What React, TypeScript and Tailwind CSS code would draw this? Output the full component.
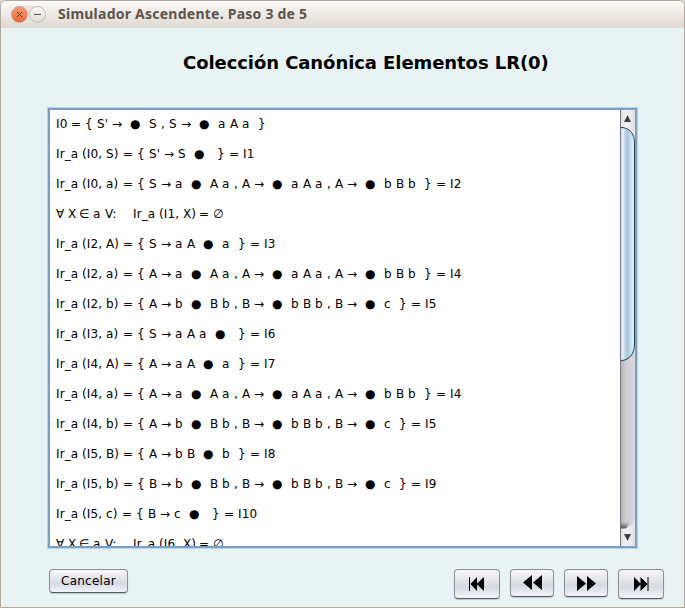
import React from "react";

// Horizontal advance in pixels of each character at 12px.
const advances: Record<string, number> = {
  I: 3, r: 5, _: 6, a: 8, b: 8, c: 7, S: 8, A: 8, B: 8, X: 7, V: 8,
  "(": 5, ")": 5, ",": 4, ":": 4, "=": 10, "{": 8, "}": 8, "'": 3,
  "→": 10, "●": 11, "∀": 8, "∈": 10, "∅": 10,
};
const SPACE = 4;

const lines = [
  "I0 = { S' →  ●  S , S →  ●  a A a  }",
  "Ir_a (I0, S) = { S' → S  ●   } = I1",
  "Ir_a (I0, a) = { S → a  ●  A a , A →  ●  a A a , A →  ●  b B b  } = I2",
  "∀ X ∈ a V:    Ir_a (I1, X) = ∅",
  "Ir_a (I2, A) = { S → a A  ●  a  } = I3",
  "Ir_a (I2, a) = { A → a  ●  A a , A →  ●  a A a , A →  ●  b B b  } = I4",
  "Ir_a (I2, b) = { A → b  ●  B b , B →  ●  b B b , B →  ●  c  } = I5",
  "Ir_a (I3, a) = { S → a A a  ●   } = I6",
  "Ir_a (I4, A) = { A → a A  ●  a  } = I7",
  "Ir_a (I4, a) = { A → a  ●  A a , A →  ●  a A a , A →  ●  b B b  } = I4",
  "Ir_a (I4, b) = { A → b  ●  B b , B →  ●  b B b , B →  ●  c  } = I5",
  "Ir_a (I5, B) = { A → b B  ●  b  } = I8",
  "Ir_a (I5, b) = { B → b  ●  B b , B →  ●  b B b , B →  ●  c  } = I9",
  "Ir_a (I5, c) = { B → c  ●   } = I10",
  "∀ X ∈ a V:    Ir_a (I6, X) = ∅",
];

function widthOf(part: string) {
  return [...part].reduce((sum, ch) => sum + (ch === " " ? SPACE : advances[ch] ?? 8), 0);
}

function Line({ text }: { text: string }) {
  const parts = text.split(/( +)/).filter(Boolean);
  return (
    <p className="flex h-[30px] leading-[28px] whitespace-pre">
      {parts.map((part, i) => (
        <span key={i} className="block shrink-0" style={{ width: widthOf(part) }}>{part}</span>
      ))}
    </p>
  );
}

function TitleBar() {
  return (
    <header className="flex h-[27px] shrink-0 items-center rounded-t-[5px] bg-linear-to-b from-[#fbfaf8] to-[#dfd8d0] pl-[10px]">
      <div className="flex gap-[1px] rounded-full bg-[#e8e4df]">
        <button className="flex size-[17px] items-center justify-center rounded-full border border-[#c9a394] bg-linear-to-b from-[#f59a77] to-[#ec6434]">
          <svg width="7" height="7" viewBox="0 0 7 7" stroke="#6d3b2a" strokeWidth="1"><path d="M1 1l5 5M6 1L1 6" /></svg>
        </button>
        <button className="flex size-[17px] items-center justify-center rounded-full border border-[#c3bdb6] bg-linear-to-b from-[#faf9f7] to-[#dfdad4]">
          <span className="h-px w-[7px] bg-[#5e5a56]" />
        </button>
      </div>
      <span className="mb-[2px] ml-[12px] font-['Noto_Sans',sans-serif] text-[14px] leading-[25px] font-bold tracking-[0.24px] whitespace-nowrap text-[#5d554d]">
        Simulador Ascendente. Paso 3 de 5
      </span>
    </header>
  );
}

function Scrollbar() {
  return (
    <svg width="15" height="436" viewBox="0 0 15 436" className="shrink-0">
      <defs>
        <linearGradient id="track"><stop offset="0" stopColor="#92949a" /><stop offset=".12" stopColor="#b8bac0" /><stop offset=".4" stopColor="#cdced4" /><stop offset="1" stopColor="#d8d9df" /></linearGradient>
        <linearGradient id="thumb"><stop offset="0" stopColor="#b0cbe0" /><stop offset=".15" stopColor="#edf4fa" /><stop offset=".3" stopColor="#c5d9e9" /><stop offset=".48" stopColor="#a6c4db" /><stop offset=".75" stopColor="#c9e0f0" /><stop offset="1" stopColor="#e4f5ff" /></linearGradient>
        <linearGradient id="cap"><stop offset="0" stopColor="#d9dade" /><stop offset=".4" stopColor="#f2f3f5" /><stop offset="1" stopColor="#e0e1e5" /></linearGradient>
        <linearGradient id="shade" x2="0" y2="1"><stop offset="0" stopColor="#333" stopOpacity="0" /><stop offset="1" stopColor="#333" stopOpacity=".75" /></linearGradient>
      </defs>
      <rect width="15" height="436" fill="url(#track)" />
      <path d="M0 0H15V32Q13 18 0 17Z" fill="url(#cap)" />
      <path d="M0 412H10L6 418.5H0Z" fill="url(#shade)" />
      <path d="M0 419H1Q11 419 14 410H15V436H0Z" fill="url(#cap)" />
      <path d="M.5 17.5H2C9 18 14.5 23 14.5 33V234C14.5 244 9 250 2 250.5H.5Z" fill="url(#thumb)" stroke="#283f55" />
      <path d="M.5 0V436" stroke="#777a80" />
      <path d="M4 12L7.5 5L11 12Z" fill="#3b3d42" />
      <path d="M4 424H11L7.5 431Z" fill="#3b3d42" />
    </svg>
  );
}

function NavButton({ tall, wide, children }: { tall?: boolean; wide?: boolean; children: React.ReactNode }) {
  return (
    <button className={`flex items-center justify-center rounded-[4px] border border-[#8b8f96] border-b-[#555961] bg-linear-to-b from-[#f8f8fa] via-[#d6d9e0] via-60% to-[#f2f4fb] shadow-[0_1px_1px_#bdc5c8] ${tall ? "h-[30px]" : "h-[28px]"} ${wide ? "w-[46px]" : "w-[44px]"}`}>
      {children}
    </button>
  );
}

export default function App() {
  return (
    <div className="h-[608px] w-[685px] bg-[#d8d5d1]">
      <main className="flex h-full flex-col rounded-t-[6px] border border-[#b5a99f] bg-[#e8f4f4] text-black">
        <TitleBar />
        <h1 className="mt-[23px] ml-[182px] h-[24px] font-['DejaVu_Sans',sans-serif] text-[18px] leading-[24px] font-bold tracking-[-0.075px] whitespace-nowrap">
          Colección Canónica Elementos LR(0)
        </h1>
        <section className="mt-[32px] ml-[46px] flex h-[442px] w-[591px] shrink-0 border border-[#b5d5ef] bg-white">
          <div className="flex w-full border-2 border-[#7b9fc7]">
            <div className="flex-1 overflow-hidden pl-[6px] font-['DejaVu_Sans',sans-serif] text-[12px] tracking-[0.12px]">
              {lines.map((line, i) => <Line key={i} text={line} />)}
            </div>
            <Scrollbar />
          </div>
        </section>
        <footer className="mt-[20px] ml-[48px] flex items-start">
          <button className="h-[24px] w-[79px] rounded-[4px] border border-[#8b8f96] border-b-[#555961] bg-linear-to-b from-[#f8f8fa] via-[#d6d9e0] via-60% to-[#f2f4fb] font-['DejaVu_Sans',sans-serif] text-[12px] leading-[22px] tracking-[0.25px] shadow-[0_1px_1px_#bdc5c8]">Cancelar</button>
          <nav className="ml-[326px] flex gap-[10px]">
            <NavButton tall wide><svg width="18" height="16" viewBox="0 0 18 16"><path d="M1 1h1v14H1zM9 1v14L2.5 8zM16 1v14L8.5 8z" /></svg></NavButton>
            <NavButton><svg width="19" height="16" viewBox="0 0 19 16"><path d="M9 0v15L0 7.5zM19 0v15l-9-7.5z" /></svg></NavButton>
            <NavButton><svg width="19" height="16" viewBox="0 0 19 16"><path d="M0 1v15l9-7.5zM10 1v15l9-7.5z" /></svg></NavButton>
            <NavButton tall wide><svg width="18" height="16" viewBox="0 0 18 16"><path d="M2 1v14l7-7zM8.5 1v14L15.5 8zM15.5 1h1v14h-1z" /></svg></NavButton>
          </nav>
        </footer>
      </main>
    </div>
  );
}
